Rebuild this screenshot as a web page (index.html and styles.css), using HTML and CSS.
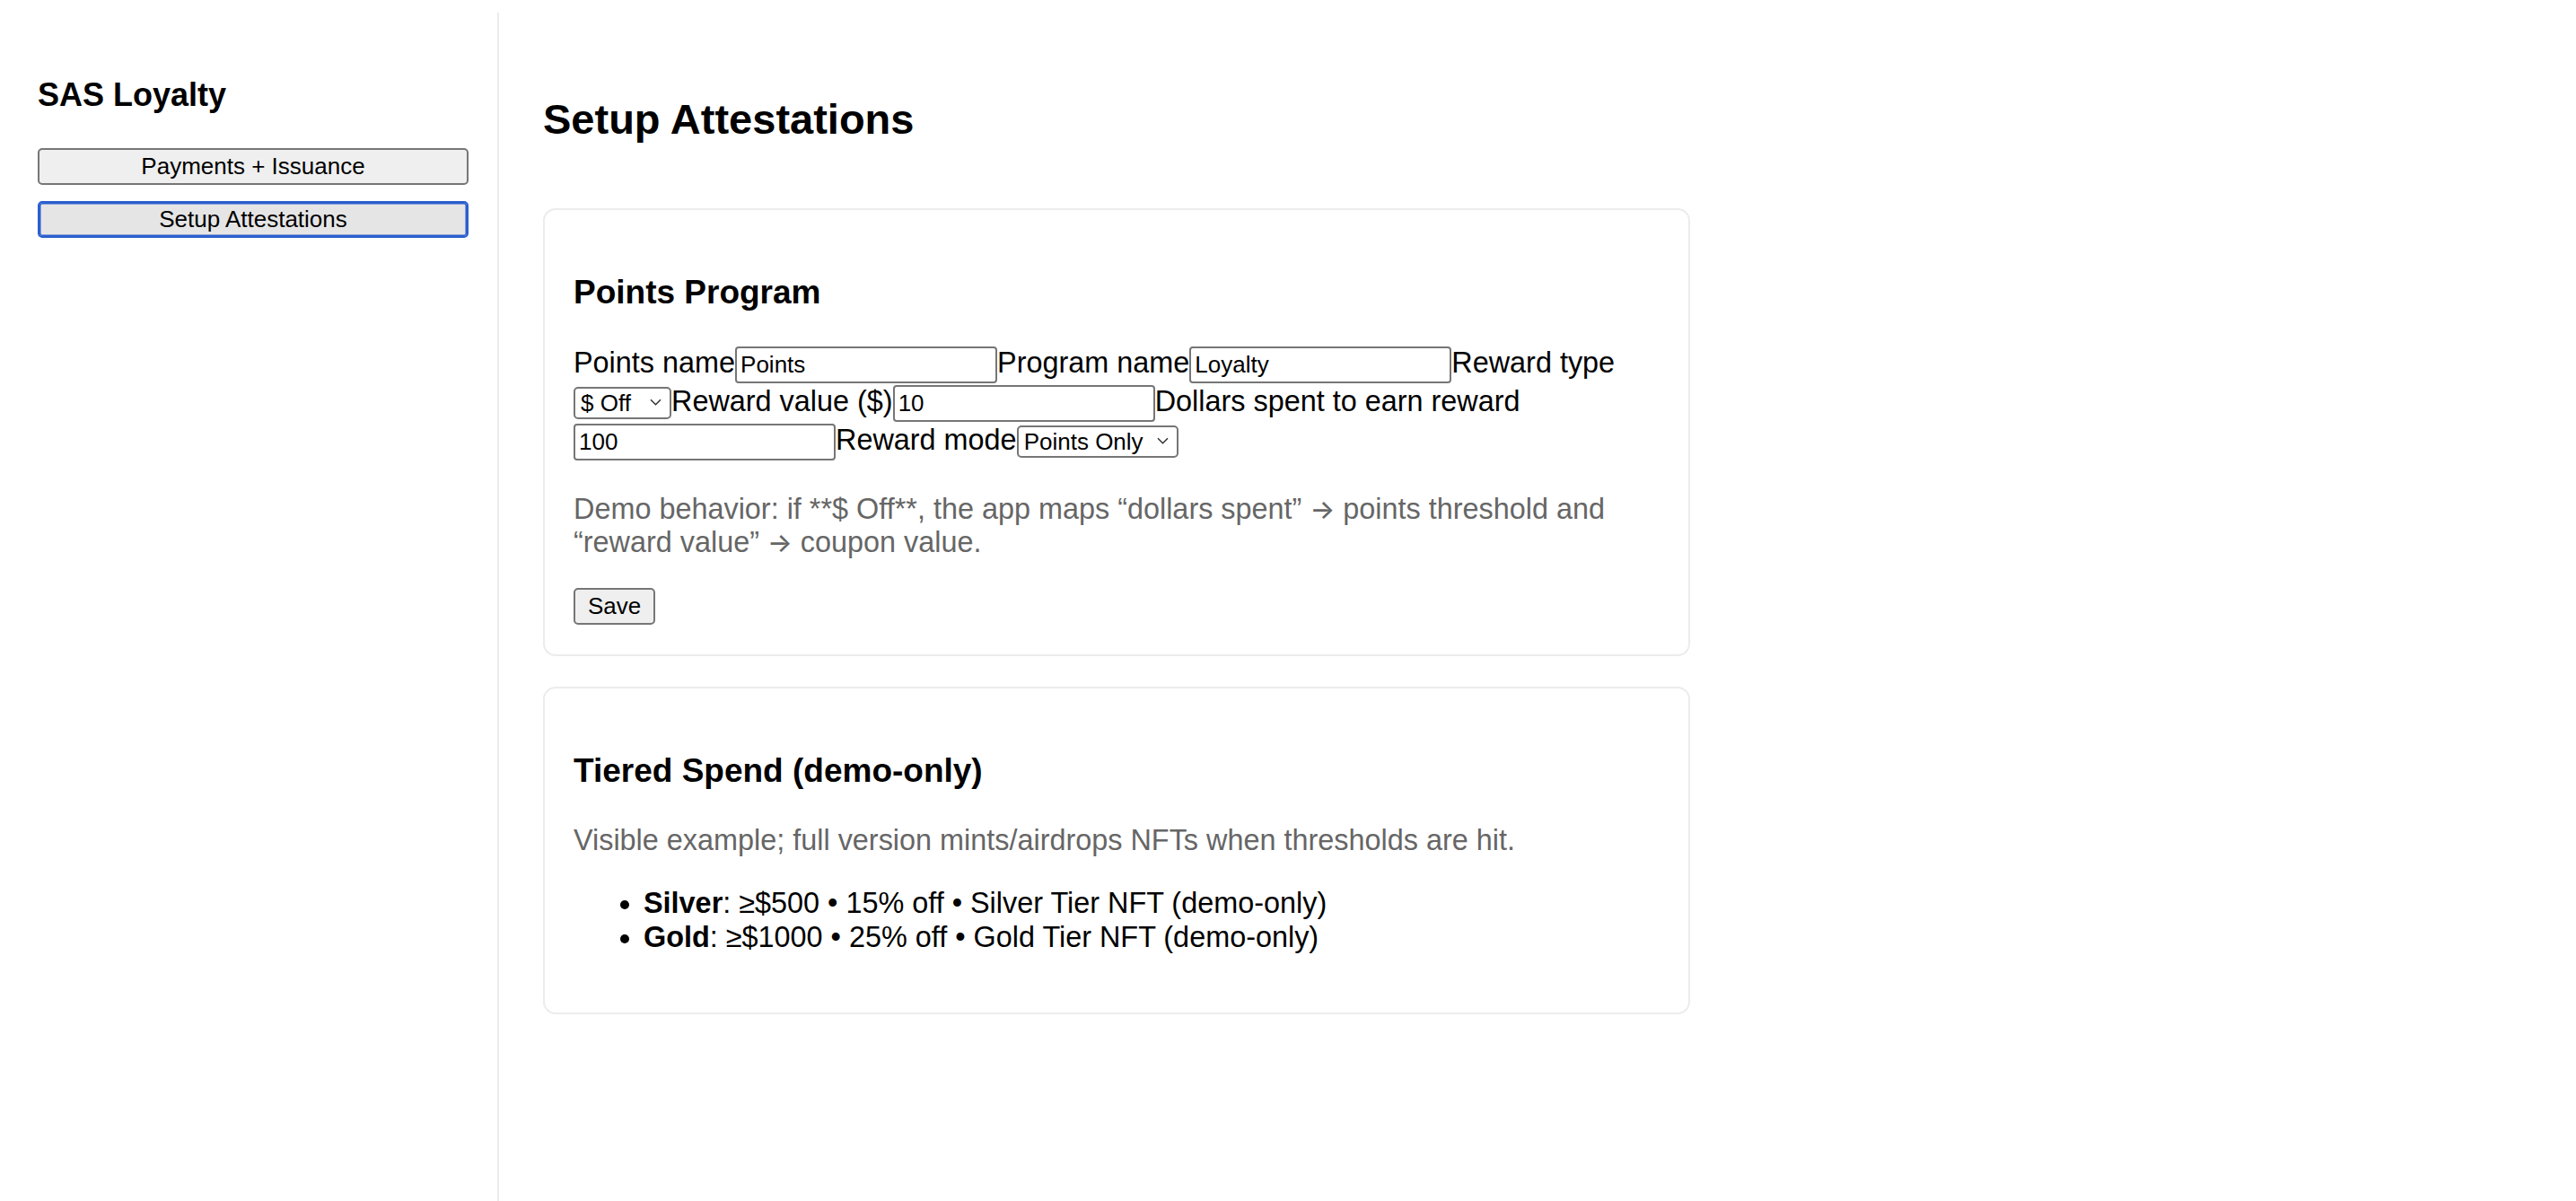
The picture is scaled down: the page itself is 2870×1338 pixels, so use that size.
FILE: index.html
```
<!DOCTYPE html>
<html lang="en">
<head>
<meta charset="utf-8">
<title>SAS Loyalty</title>
<link rel="stylesheet" href="styles.css">
</head>
<body>
<div class="layout">
  <aside class="sidebar">
    <h2 class="brand">SAS Loyalty</h2>
    <nav class="nav">
      <button class="nav-btn" type="button">Payments + Issuance</button>
      <button class="nav-btn active" type="button">Setup Attestations</button>
    </nav>
  </aside>
  <main class="main">
    <h1 class="page-title">Setup Attestations</h1>
    <section class="card">
      <h2 class="card-title">Points Program</h2>
      <div class="form-row"><label>Points name<input class="field" type="text" value="Points"></label><label>Program name<input class="field" type="text" value="Loyalty"></label><label>Reward type<span class="sel sel-type"><select><option>$ Off</option><option>% Off</option></select><svg class="chev" width="13" height="8" viewBox="0 0 13 8"><path d="M1 1.2l5.5 5.6 5.5-5.6" fill="none" stroke="#333" stroke-width="1.5"/></svg></span></label><label>Reward value ($)<input class="field" type="text" inputmode="numeric" value="10"></label><label>Dollars spent to earn reward<input class="field" type="text" inputmode="numeric" value="100"></label><label>Reward mode<span class="sel sel-mode"><select><option>Points Only</option><option>Tiers Only</option></select><svg class="chev" width="13" height="8" viewBox="0 0 13 8"><path d="M1 1.2l5.5 5.6 5.5-5.6" fill="none" stroke="#333" stroke-width="1.5"/></svg></span></label></div>
      <p class="muted">Demo behavior: if **$ Off**, the app maps “dollars spent” <span class="arrow">→</span> points threshold and “reward value” <span class="arrow">→</span> coupon value.</p>
      <div class="actions"><button class="save" type="button">Save</button></div>
    </section>
    <section class="card">
      <h2 class="card-title">Tiered Spend (demo-only)</h2>
      <p class="muted">Visible example; full version mints/airdrops NFTs when thresholds are hit.</p>
      <ul class="tiers">
        <li><b>Silver</b>: ≥$500 • 15% off • Silver Tier NFT (demo-only)</li>
        <li><b>Gold</b>: ≥$1000 • 25% off • Gold Tier NFT (demo-only)</li>
      </ul>
    </section>
  </main>
</div>
</body>
</html>
```
FILE: styles.css
```
html, body {
  background: #ffffff;
}

body {
  margin: 14px 14px 0 14px;
  font-family: "Liberation Sans", Arial, Helvetica, sans-serif;
  font-size: 32.4px;
  color: #000;
}

.layout {
  display: grid;
  grid-template-columns: 542px 1fr;
  min-height: calc(100vh - 14px);
}

.sidebar {
  box-sizing: border-box;
  border-right: 2px solid #ececec;
  padding: 0 32px 0 28px;
}

.brand {
  font-size: 36px;
  font-weight: 700;
  margin: 71px 0 38px;
}

.nav {
  display: flex;
  flex-direction: column;
  gap: 18px;
}

.nav-btn {
  box-sizing: border-box;
  width: 100%;
  height: 41px;
  font-family: "Liberation Sans", Arial, Helvetica, sans-serif;
  font-size: 26px;
  color: #000;
  background: #efefef;
  border: 2px solid #767676;
  border-radius: 5px;
  padding: 0 10px;
}

.nav-btn.active {
  background: #e5e5e5;
  border-color: #2b5fcf;
  box-shadow: inset 0 0 0 1.5px #2b5fcf;
}

.main {
  padding: 0 49px;
}

.page-title {
  font-size: 47px;
  font-weight: 700;
  margin: 91px 0 72px;
}

.card {
  box-sizing: border-box;
  max-width: 1278px;
  border: 2px solid #ececec;
  border-radius: 14px;
  padding: 29px 29px 33px 32px;
  margin-bottom: 34px;
}

.card-title {
  font-size: 37px;
  font-weight: 700;
  margin: 42px 0 38px;
}

.form-row {
  margin: 0;
}

.field {
  box-sizing: border-box;
  width: 292px;
  height: 41px;
  font-family: "Liberation Sans", Arial, Helvetica, sans-serif;
  font-size: 26px;
  color: #000;
  background: #fff;
  border: 2px solid #767676;
  border-radius: 4px;
  padding: 0 4px;
  margin: 1px 0;
}

.sel {
  position: relative;
  display: inline-block;
}

.sel select {
  box-sizing: border-box;
  -webkit-appearance: none;
  appearance: none;
  width: 100%;
  height: 36px;
  font-family: "Liberation Sans", Arial, Helvetica, sans-serif;
  font-size: 26px;
  color: #000;
  background: #fff;
  border: 2px solid #767676;
  border-radius: 5px;
  padding: 0 24px 0 6px;
  margin: 0;
}

.sel-type {
  width: 109px;
}

.sel-mode {
  width: 180px;
}

.chev {
  position: absolute;
  right: 11px;
  top: 50%;
  transform: translateY(-50%);
  pointer-events: none;
}

.muted {
  color: #666;
  margin: 35px 0 32px;
}

.arrow {
  font-family: Inter, "Noto Sans", sans-serif;
  font-weight: 500;
  font-size: 0.9em;
  line-height: 1;
}

.actions {
  margin-top: 32px;
}

.save {
  box-sizing: border-box;
  height: 41px;
  font-family: "Liberation Sans", Arial, Helvetica, sans-serif;
  font-size: 26px;
  color: #000;
  background: #efefef;
  border: 2px solid #767676;
  border-radius: 5px;
  padding: 0 14px;
}

.tiers {
  margin: 32px 0;
  padding-left: 78px;
}

.tiers li {
  line-height: 38px;
}
```
